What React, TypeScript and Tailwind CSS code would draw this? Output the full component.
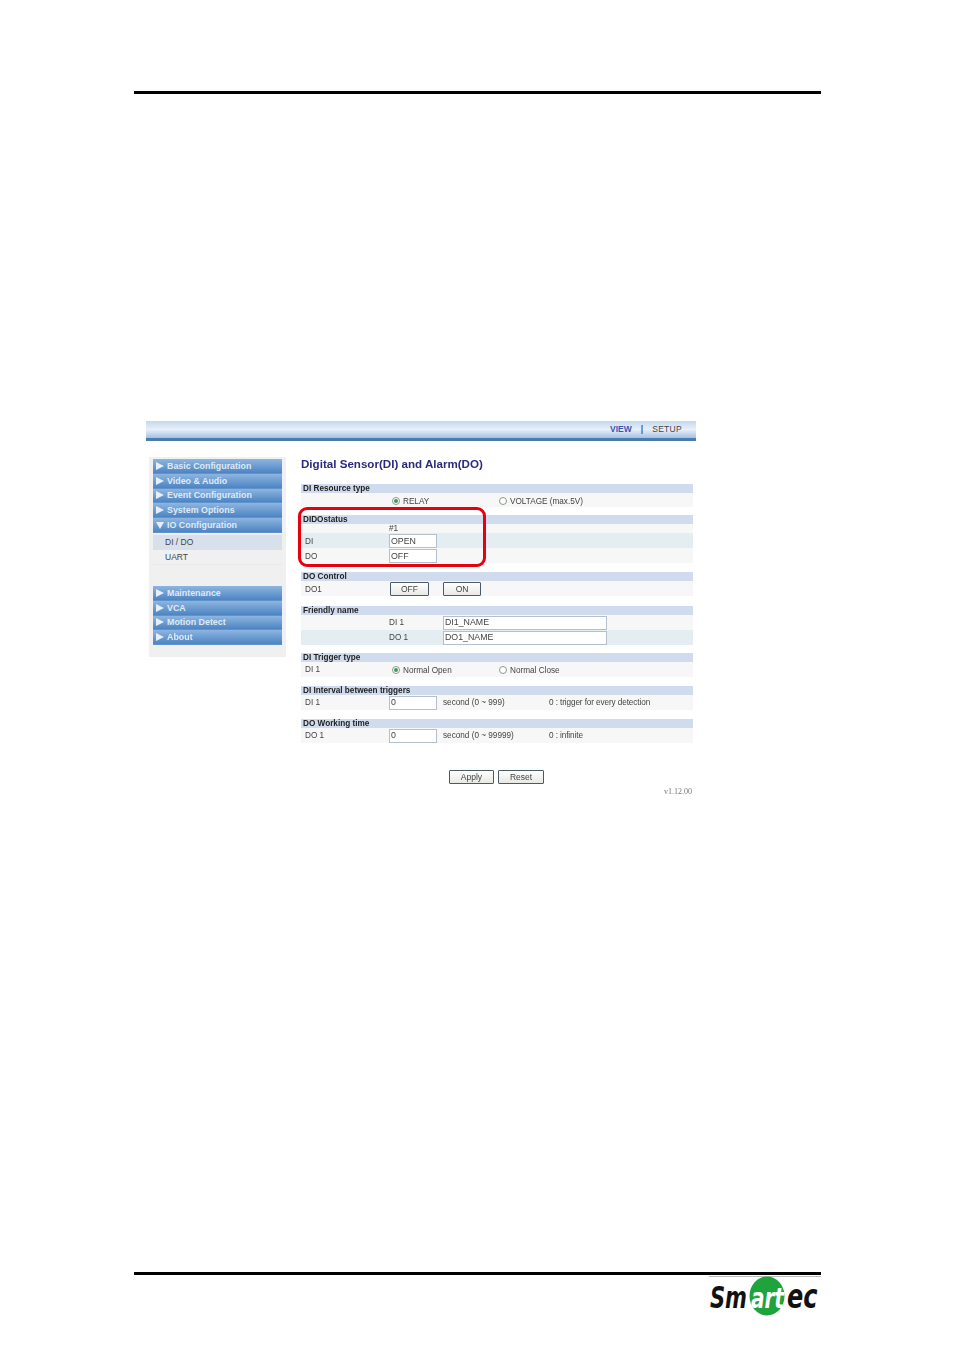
import React from 'react';

const menuTop = ['Basic Configuration', 'Video & Audio', 'Event Configuration', 'System Options'];
const menuBottom = ['Maintenance', 'VCA', 'Motion Detect', 'About'];

function MenuItem({ label, open }: { label: string; open?: boolean }) {
  return (
    <div className="flex h-[14.8px] items-center border-b border-[#5f93cb] bg-gradient-to-b from-[#8db5e0] to-[#4c84c2] pl-[3px] text-[8.9px] font-bold text-[#dfeaf6]">
      <span className="flex w-[11px] items-center">
        <svg width="8" height="8" viewBox="0 0 8 8" className="text-[#e6eef8]">
          <polygon points={open ? '0,1 8,1 4,8' : '0,0 8,4 0,8'} fill="currentColor" />
        </svg>
      </span>
      <span className="pt-[1px]">{label}</span>
    </div>
  );
}

function Header({ label }: { label: string }) {
  return <div className="h-[9px] bg-[#d0dcee] pl-[2px] text-[8.2px] leading-[9px] font-bold text-[#222]">{label}</div>;
}

function Row({ h = 15, blue, children }: { h?: number; blue?: boolean; children?: React.ReactNode }) {
  return (
    <div
      className={`grid grid-cols-[88px_54px_106px_1fr] items-center pt-[1px] text-[8.2px] text-[#444] ${blue ? 'bg-[#e4eef2]' : 'bg-[#f7f7f7]'}`}
      style={{ height: h }}
    >
      {children}
    </div>
  );
}

function Label({ children, low }: { children?: React.ReactNode; low?: boolean }) {
  return <div className={low ? 'pt-[2px] pl-[4px]' : 'pl-[4px]'}>{children}</div>;
}

function Field({ value, w = 48 }: { value: string; w?: number }) {
  return (
    <div className="flex h-[14px] items-center border border-[#b4c0cc] bg-white pl-[1px] text-[8.8px] text-[#444]" style={{ width: w }}>
      {value}
    </div>
  );
}

function Radio({ checked, label }: { checked?: boolean; label: string }) {
  return (
    <div className="flex items-center gap-[3px] whitespace-nowrap pl-[3px]">
      <span className="flex h-[8px] w-[8px] items-center justify-center rounded-full border border-[#8a9a8a] bg-white">
        {checked && <span className="h-[4px] w-[4px] rounded-full bg-[#3c9a5a]" />}
      </span>
      <span className="pt-[2px]">{label}</span>
    </div>
  );
}

function Gray({ label, w }: { label: string; w: number }) {
  return (
    <div
      className="flex h-[14px] items-center justify-center rounded-[1px] border border-[#4a5a68] bg-gradient-to-b from-white to-[#e8e8e4] text-[8.5px] text-[#444]"
      style={{ width: w }}
    >
      {label}
    </div>
  );
}

function Logo() {
  return (
    <svg width="112" height="42" viewBox="0 0 112 42" className="block">
      <line x1="0" y1="0.5" x2="112" y2="0.5" stroke="#bbb" />
      <ellipse cx="58" cy="20" rx="17.5" ry="19.5" fill="#1fa33c" />
      <g fontFamily="'DejaVu Sans', sans-serif" fontStyle="italic" fontWeight="700" transform="scale(1 1.4)">
        <text x="1" y="23" fontSize="21" fill="#111">Sm</text>
        <text x="42" y="23" fontSize="20" fill="#fff">art</text>
        <text x="78" y="23" fontSize="24" fill="#111">ec</text>
      </g>
    </svg>
  );
}

export default function App() {
  return (
    <div className="flex h-[1350px] w-[954px] flex-col overflow-hidden bg-white font-['Liberation_Sans',Arial,sans-serif]">
      <div className="mr-[133px] ml-[134px] mt-[91px] h-[3px] bg-black" />

      <div className="mt-[327px] ml-[146px] w-[550px] blur-[0.35px]">
        <div className="flex h-[20px] items-center justify-end gap-[9px] border-b-[3px] border-[#4a7cb0] bg-gradient-to-b from-[#c3d8ef] via-[#e8f0f9] to-[#a4c1e2] pr-[14px] text-[8.5px] font-bold">
          <span className="text-[#3a56b8]">VIEW</span>
          <span className="text-[#3a56b8]">|</span>
          <span className="font-normal tracking-[0.3px] text-[#444]">SETUP</span>
        </div>

        <div className="mt-[16px] flex">
          <div className="ml-[3px] h-[200px] w-[137px] bg-[#f0f0f0] px-[4px] pt-[2px]">
            {menuTop.map((m) => (
              <MenuItem key={m} label={m} />
            ))}
            <MenuItem label="IO Configuration" open />
            <div className="mt-[2px] flex h-[15px] items-center bg-[#d8e0ec] pl-[12px] text-[8.5px] text-[#444]">DI / DO</div>
            <div className="flex h-[15px] items-center border-b border-[#e8e8e8] pl-[12px] text-[8.5px] text-[#444]">UART</div>
            <div className="h-[21px]" />
            {menuBottom.map((m) => (
              <MenuItem key={m} label={m} />
            ))}
          </div>

          <div className="ml-[15px] w-[392px]">
            <div className="h-[27px] text-[11.6px] leading-[14px] font-bold text-[#2c2a7c]">Digital Sensor(DI) and Alarm(DO)</div>

            <Header label="DI Resource type" />
            <Row h={14}>
              <Label />
              <div className="col-span-3 flex">
                <div className="w-[107px]"><Radio checked label="RELAY" /></div>
                <Radio label="VOLTAGE (max.5V)" />
              </div>
            </Row>

            <div className="relative mt-[8px]">
              <Header label="DIDOstatus" />
              <Row h={9}>
                <Label />
                <div className="leading-none">#1</div>
              </Row>
              <Row blue>
                <Label low>DI</Label>
                <Field value="OPEN" />
              </Row>
              <Row>
                <Label low>DO</Label>
                <Field value="OFF" />
              </Row>
              <div className="absolute top-[-8px] left-[-3px] h-[60px] w-[188px] rounded-[9px] border-[3px] border-[#e8000c]" />
            </div>

            <div className="mt-[9px]">
              <Header label="DO Control" />
              <Row>
                <Label low>DO1</Label>
                <div className="pl-[1px]"><Gray label="OFF" w={39} /></div>
                <Gray label="ON" w={38} />
              </Row>
            </div>

            <div className="mt-[10px]">
              <Header label="Friendly name" />
              <Row>
                <Label />
                <div>DI 1</div>
                <div className="col-span-2"><Field value="DI1_NAME" w={164} /></div>
              </Row>
              <Row blue>
                <Label />
                <div>DO 1</div>
                <div className="col-span-2"><Field value="DO1_NAME" w={164} /></div>
              </Row>
            </div>

            <div className="mt-[8px]">
              <Header label="DI Trigger type" />
              <Row>
                <Label>DI 1</Label>
                <div className="col-span-3 flex">
                  <div className="w-[107px]"><Radio checked label="Normal Open" /></div>
                  <Radio label="Normal Close" />
                </div>
              </Row>
            </div>

            <div className="mt-[9px]">
              <Header label="DI Interval between triggers" />
              <Row>
                <Label>DI 1</Label>
                <Field value="0" />
                <div>second (0 ~ 999)</div>
                <div className="tracking-[-0.1px]">0 : trigger for every detection</div>
              </Row>
            </div>

            <div className="mt-[9px]">
              <Header label="DO Working time" />
              <Row>
                <Label>DO 1</Label>
                <Field value="0" />
                <div>second (0 ~ 99999)</div>
                <div className="tracking-[-0.1px]">0 : infinite</div>
              </Row>
            </div>

            <div className="mt-[27px] ml-[148px] flex gap-[4px]">
              <Gray label="Apply" w={45} />
              <Gray label="Reset" w={46} />
            </div>
            <div className="mt-[2px] pr-[1px] text-right font-['Liberation_Serif',serif] text-[8px] text-[#777]">v1.12.00</div>
          </div>
        </div>
      </div>

      <div className="mr-[133px] ml-[134px] mt-[474px] h-[3px] bg-black" />
      <div className="mt-[1px] ml-[709px] w-[112px]">
        <Logo />
      </div>
    </div>
  );
}
